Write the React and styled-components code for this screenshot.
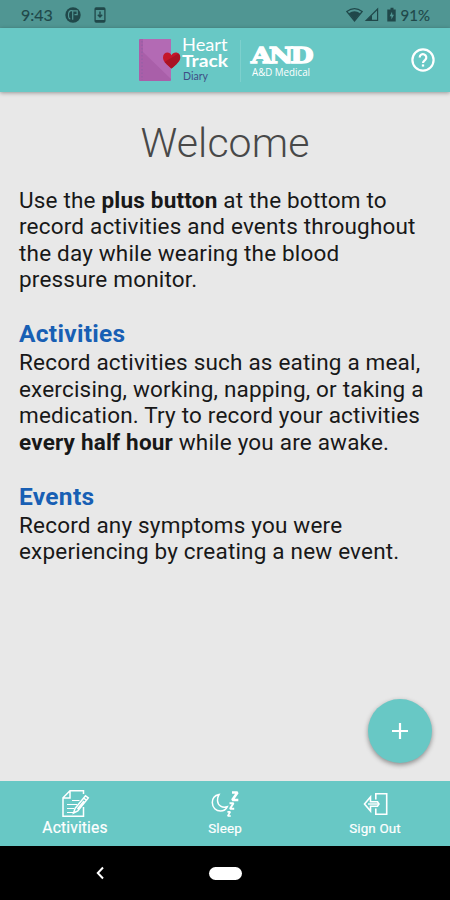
import styled, { createGlobalStyle, css } from "styled-components"

const GlobalStyle = createGlobalStyle`
    * {
        box-sizing: border-box;
    }
    body {
        margin: 0;
        background: #e8e8e8;
        font-family: Roboto, "Liberation Sans", sans-serif;
    }
`;
const Screen = styled.div`
    width: 450px;
    height: 900px;
    display: flex;
    flex-direction: column;
    overflow: hidden;
    background: #e8e8e8;
`;
const StatusBar = styled.div`
    height: 28px;
    flex: none;
    display: flex;
    align-items: center;
    justify-content: space-between;
    padding: 1px 20px 0 21px;
    background: #509693;
    color: #20484a;
`;
const StatusGroup = styled.div`
    display: flex;
    align-items: center;
    gap: ${props => props.$gap}px;
`;
const StatusText = styled.span`
    font-family: Lato, sans-serif;
    font-size: ${props => props.$size}px;
    font-weight: 400;
    line-height: 20px;
    -webkit-text-stroke: 0.15px #20484a;
`;
const Header = styled.header`
    height: 64px;
    flex: none;
    display: grid;
    grid-template-columns: 1fr auto 1fr;
    align-items: center;
    padding: 0 15px;
    background: #68c8c5;
    box-shadow: 0 1px 4px rgba(0, 0, 0, 0.35);
    z-index: 1;
`;
const Logo = styled.svg`
    grid-column: 2;
    display: block;
    overflow: visible;
`;
const HelpButton = styled.button`
    justify-self: end;
    display: flex;
    padding: 0;
    border: 0;
    background: none;
    color: white;
`;
const Content = styled.main`
    flex: 1;
    position: relative;
    padding: 27px 19px 0;
    color: #181818;
`;
const Title = styled.h1`
    margin: 0;
    text-align: center;
    font-size: 41px;
    font-weight: 300;
    line-height: 48px;
    letter-spacing: 0.1px;
    color: #484848;
`;
const Heading = styled.h2`
    margin: 27.6px 0 1.4px;
    font-size: 24.5px;
    font-weight: 700;
    line-height: 28px;
    letter-spacing: 0.3px;
    color: #185fb4;
`;
const Paragraph = styled.p`
    margin: 0;
    font-size: 22.5px;
    line-height: 26.4px;
    letter-spacing: 0.19px;
    white-space: nowrap;
    ${props => props.$first && css`
        margin-top: 19.8px;
    `}
`;
const AddButton = styled.button`
    position: absolute;
    right: 18px;
    bottom: 18px;
    width: 64px;
    height: 64px;
    display: flex;
    align-items: center;
    justify-content: center;
    padding: 0;
    border: 0;
    border-radius: 50%;
    background: #68c8c5;
    box-shadow: 0 2px 5px rgba(0, 0, 0, 0.4);
`;
const TabBar = styled.nav`
    height: 65px;
    flex: none;
    display: grid;
    grid-template-columns: repeat(3, 1fr);
    background: #68c8c5;
`;
const Tab = styled.div`
    display: flex;
    flex-direction: column;
    align-items: center;
    padding-top: 8px;
    color: white;
`;
const TabLabel = styled.span`
    font-size: ${props => (props.$active ? 15.6 : 13.4)}px;
    font-weight: 400;
    line-height: 18px;
    letter-spacing: 0.15px;
    margin-top: ${props => (props.$active ? 0 : 1)}px;
    -webkit-text-stroke: 0.2px white;
`;
const SystemBar = styled.div`
    height: 54px;
    flex: none;
    display: grid;
    grid-template-columns: 200px 50px 200px;
    align-items: center;
    justify-items: center;
    background: black;
`;
const HomePill = styled.div`
    width: 33px;
    height: 13px;
    border-radius: 7px;
    background: white;
`;

function NoticeIcon() {
    return (
        <svg width="16" height="16" viewBox="0 0 16 16">
            <circle cx="8" cy="8" r="7.7" fill="currentColor" />
            <path d="M7.500 3.600H5.800q-2.300.6-2.300 4.400t1.800 3.900M7.700 12.800V3.800h4.500v3.800H9.500" fill="none" stroke="#509693" strokeWidth="1.200" />
        </svg>
    )
}

function DownloadIcon() {
    return (
        <svg width="12" height="16" viewBox="0 0 12 16" fill="none" stroke="currentColor">
            <rect x="1.1" y="1" width="9.8" height="14" rx="1" strokeWidth="1.3" />
            <path d="M1 2h10M1 14h10" strokeWidth="2" />
            <path d="M6 4.6v5M3.8 7.7 6 10l2.2-2.3" strokeWidth="1.4" />
        </svg>
    )
}

function SignalIcons() {
    return (
        <svg width="50" height="16" viewBox="0 0 50 16">
            <path d="M.8 4.5Q8.500-1.200 16.200 4.500L8.500 14z" fill="none" stroke="currentColor" strokeWidth="1.2" />
            <path d="M2.800 6.200Q8.500 2.500 14.200 6.200L8.500 13.600z" fill="currentColor" />
            <path d="M20.200 13.400 31.600 2v11.400z" fill="none" stroke="currentColor" strokeWidth="1.200" />
            <path d="M20 13.700 26 8v5.700z" fill="currentColor" />
            <path d="M44.500.8h3v1.600h2.200v12h-8.400v-12h3.200z" fill="currentColor" />
            <path d="m46 4.800-2.300 4.400h1.700v3.200l2.600-4.700h-1.700z" fill="#509693" />
        </svg>
    )
}

function BrandLogo() {
    return (
        <Logo width="176" height="56" viewBox="0 -4 176 56">
            <rect x="2" y="3" width="32" height="42" rx="1" fill="#a95fa9" />
            <path d="M6 3h27q1 0 1 1v39L6 16z" fill="#b36ab4" />
            <path d="M5 5v39" stroke="#8d60a5" strokeWidth="1" strokeDasharray="1.500 2" />
            <path d="M34.500 32.500C30 28.800 26 25.500 26 21.500c0-5.500 6.500-6.500 8.500-2.300 2-4.200 8.800-3.200 8.800 2.300 0 4-4.300 7.300-8.800 11z" fill="#c5162a" />
            <path d="M34.500 32.500 27.500 26l14-8.500c3 3.500 1.800 8-7 15z" fill="#a91424" />
            <g fill="white" fontFamily="Lato, sans-serif">
                <text x="45" y="15" fontSize="17" textLength="45.500" lengthAdjust="spacingAndGlyphs">Heart</text>
                <text x="45" y="31" fontSize="17" fontWeight="700" textLength="46" lengthAdjust="spacingAndGlyphs">Track</text>
                <text x="46" y="44" fontSize="11.500" fill="#3f4f86" textLength="25" lengthAdjust="spacingAndGlyphs">Diary</text>
            </g>
            <path d="M103.500 4v42" stroke="#7dd0cd" />
            <g fill="white">
                <text transform="translate(114 27) scale(1.170 1)" fontFamily="DejaVu Serif, serif" fontSize="23" fontWeight="700" stroke="white" strokeWidth="1.300" letterSpacing="-2.700">AND</text>
                <text x="115" y="40" fontFamily="Open Sans, sans-serif" fontSize="10" fontWeight="500" textLength="58" lengthAdjust="spacingAndGlyphs">A&amp;D Medical</text>
            </g>
        </Logo>
    )
}

function HelpIcon() {
    return (
        <svg width="24" height="24" viewBox="0 0 24 24" fill="none" stroke="currentColor">
            <circle cx="12" cy="12" r="10.600" strokeWidth="2.200" />
            <path d="M8.700 9.500a3.300 3.300 0 1 1 5.500 2.400c-1.200 1-2.200 1.500-2.200 3.100" strokeWidth="2.200" />
            <path d="M12 16.400v2.200" strokeWidth="2.300" />
        </svg>
    )
}

function ActivitiesIcon() {
    return (
        <svg width="30" height="30" viewBox="0 0 30 30" fill="none" stroke="currentColor" strokeWidth="1.500">
            <path d="M23.500 5V1.800H10L3 8.800v18.500h20.500V18M10 2v7H3" />
            <path d="M12 11.500h7.500M7 15.500h10M7 19.500h7M7 23.500h6" strokeWidth="1.200" />
            <path d="m15 19.500 10.500-12.800 2.800 2.200L17.800 21.800l-4.300 2.200zM23.500 9l2.900 2.200M17.500 20l6.500-8" />
        </svg>
    )
}

function SleepIcon() {
    return (
        <svg width="30" height="30" viewBox="0 0 30 30" fill="none" stroke="currentColor">
            <path d="M9 5.500C5 6.300 2.300 9.500 2.300 13.600c0 5 3.800 8.400 8.300 8.400 3 0 5.300-1.600 6.600-4.200-5 1.500-9.400-1.300-9.700-6.100-.1-2.400.5-4.500 1.500-6.200z" strokeWidth="1.500" />
            <path d="M22 3.500h5.500L22.300 11h6" strokeWidth="2.600" strokeLinejoin="bevel" />
            <path d="M19.500 14.300h4L20 19.700h4.200" strokeWidth="2" strokeLinejoin="bevel" />
            <path d="M17.400 22.800h2.800L17.800 27h3" strokeWidth="1.700" strokeLinejoin="bevel" />
        </svg>
    )
}

function SignOutIcon() {
    return (
        <svg width="30" height="30" viewBox="0 0 30 30" fill="none" stroke="currentColor" strokeWidth="1.600">
            <path d="M15.800 10.500V4.700H26.700v20.600H15.800v-5.800" />
            <path d="m4.500 15 6-7v4.700h7l1.500 2.300-1.500 2.300h-7V22z" />
            <path d="M8 15h10" strokeWidth="1.400" />
        </svg>
    )
}

const tabs = [
    { label: "Activities", icon: ActivitiesIcon, active: true },
    { label: "Sleep", icon: SleepIcon },
    { label: "Sign Out", icon: SignOutIcon },
];

export default function App() {
    return (
        <Screen>
            <GlobalStyle />
            <StatusBar>
                <StatusGroup $gap={12.5}>
                    <StatusText $size={16}>9:43</StatusText>
                    <NoticeIcon />
                    <DownloadIcon />
                </StatusGroup>
                <StatusGroup $gap={5}>
                    <SignalIcons />
                    <StatusText $size={15}>91%</StatusText>
                </StatusGroup>
            </StatusBar>

            <Header>
                <BrandLogo />
                <HelpButton aria-label="Help">
                    <HelpIcon />
                </HelpButton>
            </Header>

            <Content>
                <Title>Welcome</Title>
                <Paragraph $first>
                    Use the <b>plus button</b> at the bottom to<br />
                    record activities and events throughout<br />
                    the day while wearing the blood<br />
                    pressure monitor.
                </Paragraph>

                <Heading>Activities</Heading>
                <Paragraph>
                    Record activities such as eating a meal,<br />
                    exercising, working, napping, or taking a<br />
                    medication. Try to record your activities<br />
                    <b>every half hour</b> while you are awake.
                </Paragraph>

                <Heading>Events</Heading>
                <Paragraph>
                    Record any symptoms you were<br />
                    experiencing by creating a new event.
                </Paragraph>

                <AddButton aria-label="Add">
                    <svg width="18" height="18" viewBox="0 0 18 18" stroke="white" strokeWidth="2.200">
                        <path d="M9 1v16M1 9h16" />
                    </svg>
                </AddButton>
            </Content>

            <TabBar>
                {tabs.map(({ label, icon: Icon, active }) => (
                    <Tab key={label}>
                        <Icon />
                        <TabLabel $active={active}>{label}</TabLabel>
                    </Tab>
                ))}
            </TabBar>

            <SystemBar>
                <svg width="8" height="14" viewBox="0 0 8 14" fill="none" stroke="white" strokeWidth="2">
                    <path d="M7 1.500 1.800 7 7 12.500" />
                </svg>
                <HomePill />
            </SystemBar>
        </Screen>
    )
}
